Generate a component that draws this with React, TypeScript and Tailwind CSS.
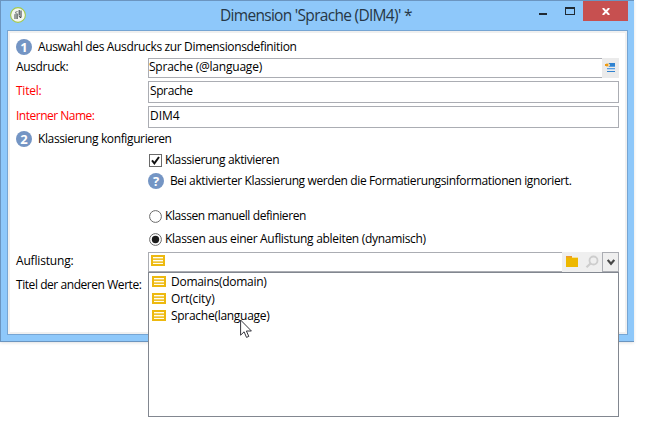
import React from "react";

function Badge({ children }: { children: React.ReactNode }) {
  return (
    <span className="flex size-4 shrink-0 items-center justify-center rounded-full bg-[#7495c4] text-[13px] leading-none font-bold text-white">
      {children}
    </span>
  );
}

function ListIcon() {
  return (
    <svg width="14" height="11" viewBox="0 0 14 11" shapeRendering="crispEdges" className="shrink-0">
      <rect width="14" height="11" fill="#edb90f" />
      <rect x="2" y="2" width="10" height="7" fill="#f5d467" />
      <path d="M2 2.5h10M2 5.5h10M2 8.5h10" stroke="#fffdf0" />
      <path d="M2 4.5h10M2 7.5h10" stroke="#f0c22e" />
    </svg>
  );
}

function Radio({ checked }: { checked?: boolean }) {
  return (
    <svg width="13" height="13" viewBox="0 0 13 13" className="shrink-0">
      <circle cx="6.5" cy="6.5" r="5.9" fill="#fff" stroke="#6a6a6a" strokeWidth="1" />
      {checked && <circle cx="6.5" cy="6.5" r="3.7" fill="#1c1c1c" />}
    </svg>
  );
}

function TitleBar() {
  return (
    <header className="flex h-[29px] shrink-0 items-start text-[#263746]">
      <svg width="16" height="16" viewBox="0 0 16 16" className="mt-[6px] ml-[9px]">
        <circle cx="8" cy="8" r="7.4" fill="#f4f6f1" stroke="#a2c84b" strokeWidth="1.1" />
        <path d="M4 12V7.5L6 6h1.6v6z" fill="#9aa09e" />
        <path d="M5 5.5l2.5-1M7.3 7V12" fill="none" stroke="#5d6466" strokeWidth="0.9" />
        <path d="M9.2 3v5.5M11 3.5v7M8.8 9.3l2.2 1.4" fill="none" stroke="#2c3236" strokeWidth="1" />
      </svg>
      <h1 className="mt-[3px] ml-[194px] w-[200px] whitespace-nowrap text-[15.5px] leading-[23px] font-normal tracking-[-0.7px]">
        Dimension 'Sprache (DIM4)' *
      </h1>
      <div className="mr-[6px] ml-auto flex items-start">
        <svg width="44" height="20" viewBox="0 0 44 20" shapeRendering="crispEdges">
          <path d="M0 12h8v2H0z" fill="#202a33" />
          <path d="M26 6h10v8H26zM27 8v5h8V8z" fill="#202a33" fillRule="evenodd" />
        </svg>
        <div className="flex h-5 w-[45px] items-center justify-center bg-[#c75050]">
          <svg width="8" height="7" viewBox="0 0 8 7" className="mt-px">
            <path d="M.8 0l6.4 7M7.2 0L.8 7" stroke="#fff" strokeWidth="1.9" />
          </svg>
        </div>
      </div>
    </header>
  );
}

function Dropdown() {
  return (
    <ul className="absolute top-[272px] left-[148px] flex h-[145px] w-[471px] flex-col border border-[#828790] bg-white pl-[3px]">
      <li className="flex h-[17px] items-center gap-[5px]">
        <ListIcon />
        <span className="tracking-[-0.27px]">Domains(domain)</span>
      </li>
      <li className="flex h-[17px] items-center gap-[5px]">
        <ListIcon />
        <span className="tracking-[-0.12px]">Ort(city)</span>
      </li>
      <li className="flex h-[17px] items-center gap-[5px]">
        <ListIcon />
        <span className="tracking-[-0.28px]">Sprache(language)</span>
      </li>
    </ul>
  );
}

export default function App() {
  return (
    <div className="relative h-[442px] w-[658px] overflow-hidden bg-white font-['Open_Sans','Noto_Sans',sans-serif] text-[12px] leading-4 whitespace-nowrap text-black">
      <div className="flex h-[342px] w-[634px] flex-col border border-r-0 border-[#6b95c0] bg-[#8ec8fa] shadow-[0_1px_3px_rgba(0,0,0,0.12)]">
        <TitleBar />
        <main className="ml-[6px] flex h-[305px] w-[621px] flex-col border border-[#76a5d3] bg-white">
          <div className="flex h-[303px] flex-col border-2 border-[#f0f0f0] pl-[6px]">
            <div className="mt-[6px] flex h-4 items-center gap-[6px]">
              <Badge>1</Badge>
              <span className="tracking-[-0.35px]">Auswahl des Ausdrucks zur Dimensionsdefinition</span>
            </div>
            <div className="mt-[3px] flex h-5">
              <span className="mt-px w-[132px] tracking-[-0.35px]">Ausdruck:</span>
              <div className="flex w-[471px]">
                <div className="w-[454px] border border-r-0 border-[#abadb3]">
                  <span className="tracking-[-0.22px]">Sprache (@language)</span>
                </div>
                <div className="w-[17px] bg-[#ebebeb] pt-[5px] pl-[3px]">
                  <svg width="10" height="9" viewBox="0 0 10 9" shapeRendering="crispEdges">
                    <path d="M4 0h6v3H4z" fill="#2f82d0" />
                    <path d="M4 3h6v1H4zM2 5h8v1H2z" fill="#5b9fe0" />
                    <path d="M2 6h8v1H2z" fill="#bdd7f1" />
                    <path d="M2 8h8v1H2z" fill="#2f82d0" />
                    <path d="M0 1h3v2H0z" fill="#f09a10" />
                    <path d="M1 0h3v1H1zM1 3h3v1H1zM3 1h2v2H3z" fill="#e5cfa5" />
                  </svg>
                </div>
              </div>
            </div>
            <div className="mt-[3px] flex h-[22px]">
              <span className="mt-[2px] w-[132px] tracking-[-0.25px] text-[#ff0000]">Titel:</span>
              <div className="w-[471px] border border-[#abadb3] pt-px pl-px tracking-[-0.4px]">Sprache</div>
            </div>
            <div className="mt-[3px] flex h-[22px]">
              <span className="mt-[2px] w-[132px] tracking-[-0.5px] text-[#ff0000]">Interner Name:</span>
              <div className="w-[471px] border border-[#abadb3] pt-px pl-px">DIM4</div>
            </div>
            <div className="mt-[3px] flex h-4 items-center gap-[6px]">
              <Badge>2</Badge>
              <span className="tracking-[-0.38px]">Klassierung konfigurieren</span>
            </div>
            <div className="mt-[5px] ml-[133px] flex h-4 items-center gap-[3px]">
              <svg width="13" height="13" viewBox="0 0 13 13">
                <rect x=".5" y=".5" width="12" height="12" fill="#fff" stroke="#6a6a6a" />
                <path d="M3 6.3l2.4 3L10 3" fill="none" stroke="#111" strokeWidth="2" />
              </svg>
              <span className="tracking-[-0.38px]">Klassierung aktivieren</span>
            </div>
            <div className="mt-[5px] ml-[132px] flex h-4 items-center gap-[6px]">
              <Badge>?</Badge>
              <span className="tracking-[-0.38px]">
                Bei aktivierter Klassierung werden die Formatierungsinformationen ignoriert.
              </span>
            </div>
            <div className="mt-[19px] ml-[133px] flex h-4 items-center gap-[3px]">
              <Radio />
              <span className="tracking-[-0.4px]">Klassen manuell definieren</span>
            </div>
            <div className="mt-[7px] ml-[133px] flex h-4 items-center gap-[3px]">
              <Radio checked />
              <span className="tracking-[-0.3px]">Klassen aus einer Auflistung ableiten (dynamisch)</span>
            </div>
            <div className="mt-[5px] flex h-5">
              <span className="mt-px w-[132px] tracking-[-0.18px]">Auflistung:</span>
              <div className="flex w-[471px]">
                <div className="flex w-[414px] border border-r-0 border-[#abadb3] pt-[2px] pl-[2px]">
                  <ListIcon />
                </div>
                <div className="flex w-10 bg-[#efefef]">
                  <svg width="40" height="20" viewBox="0 0 40 20">
                    <path d="M4 4h6v1h6v10H4z" fill="#edb800" />
                    <path d="M4 4h6v1.5H4z" fill="#ee9a2a" />
                    <path d="M10 5h6v1h-6z" fill="#f8df92" />
                    <circle cx="31.5" cy="8.5" r="4" fill="none" stroke="#cdcdcd" strokeWidth="1.8" />
                    <path d="M28.5 11.5l-4 3.7" stroke="#cdcdcd" strokeWidth="2.2" />
                  </svg>
                </div>
                <div className="flex w-[17px] items-center justify-center border border-[#abadb3] bg-[#efefef]">
                  <svg width="8" height="7" viewBox="0 0 8 7">
                    <path d="M.7 1L4 4.8 7.3 1" fill="none" stroke="#484848" strokeWidth="2.2" />
                  </svg>
                </div>
              </div>
            </div>
            <span className="mt-[5px] tracking-[-0.44px]">Titel der anderen Werte:</span>
          </div>
        </main>
      </div>
      <Dropdown />
      <svg width="13" height="20" viewBox="0 0 13 20" className="absolute top-[319px] left-[240px]">
        <path d="M.6 1v15.2l3.5-3.4 2.4 5.6 2.3-1-2.4-5.4h5z" fill="#fff" stroke="#34343c" strokeWidth="1" />
      </svg>
    </div>
  );
}
